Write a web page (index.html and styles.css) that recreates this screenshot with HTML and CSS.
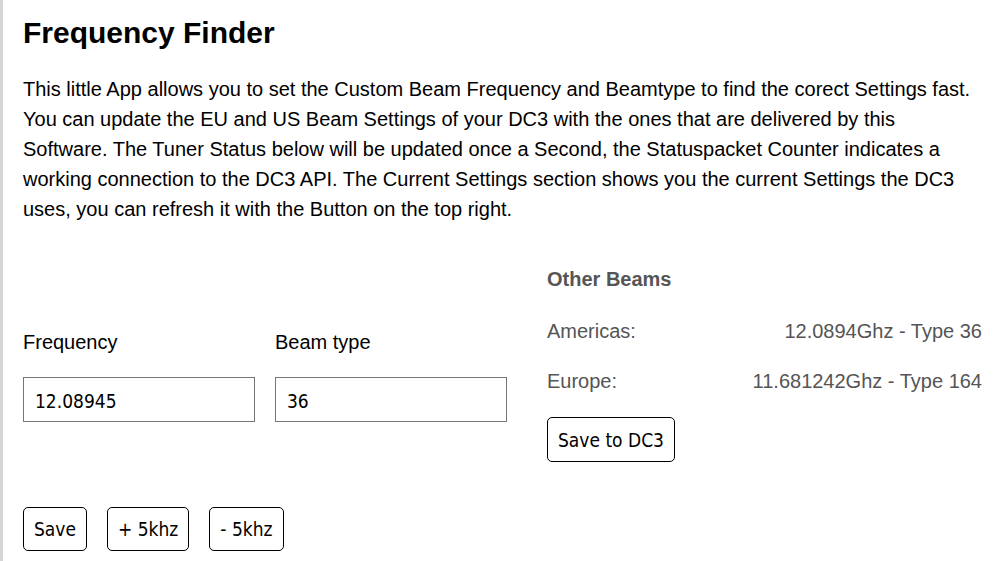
FILE: index.html
```html
<!DOCTYPE html>
<html lang="en">
<head>
    <meta charset="UTF-8">
    <meta name="viewport" content="width=device-width, initial-scale=1.0">
    <title>Frequency Finder</title>
    <link rel="stylesheet" href="styles.css">
</head>
<body>
    <main class="page">
        <h1 class="title">Frequency Finder</h1>
        <p class="intro">This little App allows you to set the Custom Beam Frequency and Beamtype to find the corect Settings fast. You can update the EU and US Beam Settings of your DC3 with the ones that are delivered by this Software. The Tuner Status below will be updated once a Second, the Statuspacket Counter indicates a working connection to the DC3 API. The Current Settings section shows you the current Settings the DC3 uses, you can refresh it with the Button on the top right.</p>

        <div class="columns">
            <form class="tuner" id="form-tuner">
                <div class="fields">
                    <div class="field">
                        <label for="frequency">Frequency</label>
                        <input type="text" id="frequency" value="12.08945">
                    </div>
                    <div class="field">
                        <label for="beam-type">Beam type</label>
                        <input type="text" id="beam-type" value="36">
                    </div>
                </div>
                <div class="actions">
                    <button type="submit">Save</button>
                    <button type="button">+ 5khz</button>
                    <button type="button">- 5khz</button>
                </div>
            </form>

            <div class="beams">
                <h2 class="beams-title">Other Beams</h2>
                <div class="beam-row">
                    <span>Americas:</span>
                    <span>12.0894Ghz - Type 36</span>
                </div>
                <div class="beam-row">
                    <span>Europe:</span>
                    <span>11.681242Ghz - Type 164</span>
                </div>
                <button type="button" class="save-dc3">Save to DC3</button>
            </div>
        </div>
    </main>
</body>
</html>
```

FILE: styles.css
```css
body {
    margin: 0;
    font-family: "Liberation Sans", Arial, sans-serif;
    background-color: white;
    color: black;
}
.page {
    min-height: 561px;
    box-sizing: border-box;
    border-left: 3px solid #d6d6d6;
    padding: 15px 18px 0 20px;
}
.title {
    margin: 0;
    font-size: 30px;
    line-height: 36px;
    font-weight: bold;
}
.intro {
    margin: 23px 0 0;
    font-size: 20px;
    line-height: 30px;
}
.columns {
    display: grid;
    grid-template-columns: 484px 1fr;
    column-gap: 40px;
    margin-top: 40px;
}
.tuner {
    margin-top: 63px;
}
.fields {
    display: flex;
    gap: 20px;
}
.field {
    width: 232px;
}
label {
    display: block;
    font-size: 20px;
    line-height: 30px;
    margin-bottom: 20px;
}
input {
    display: block;
    width: 100%;
    height: 45px;
    box-sizing: border-box;
    padding: 2px 11px 0;
    border: 1px solid #767676;
    border-radius: 0;
    font-family: "DejaVu Sans Condensed", "Liberation Sans", sans-serif;
    font-size: 19px;
    color: black;
}
.actions {
    display: flex;
    gap: 20px;
    margin-top: 85px;
}
button {
    height: 44px;
    padding: 0 10px;
    border: 1px solid black;
    border-radius: 5px;
    background-color: white;
    font-family: "DejaVu Sans Condensed", "Liberation Sans", sans-serif;
    font-size: 19px;
    color: black;
    cursor: pointer;
}
.beams {
    color: #555;
}
.beams-title {
    margin: 0 0 22px;
    font-size: 20px;
    line-height: 30px;
    font-weight: bold;
}
.beam-row {
    display: flex;
    justify-content: space-between;
    font-size: 20px;
    line-height: 30px;
    margin-bottom: 20px;
}
.save-dc3 {
    height: 45px;
    margin-top: 1px;
}
```
